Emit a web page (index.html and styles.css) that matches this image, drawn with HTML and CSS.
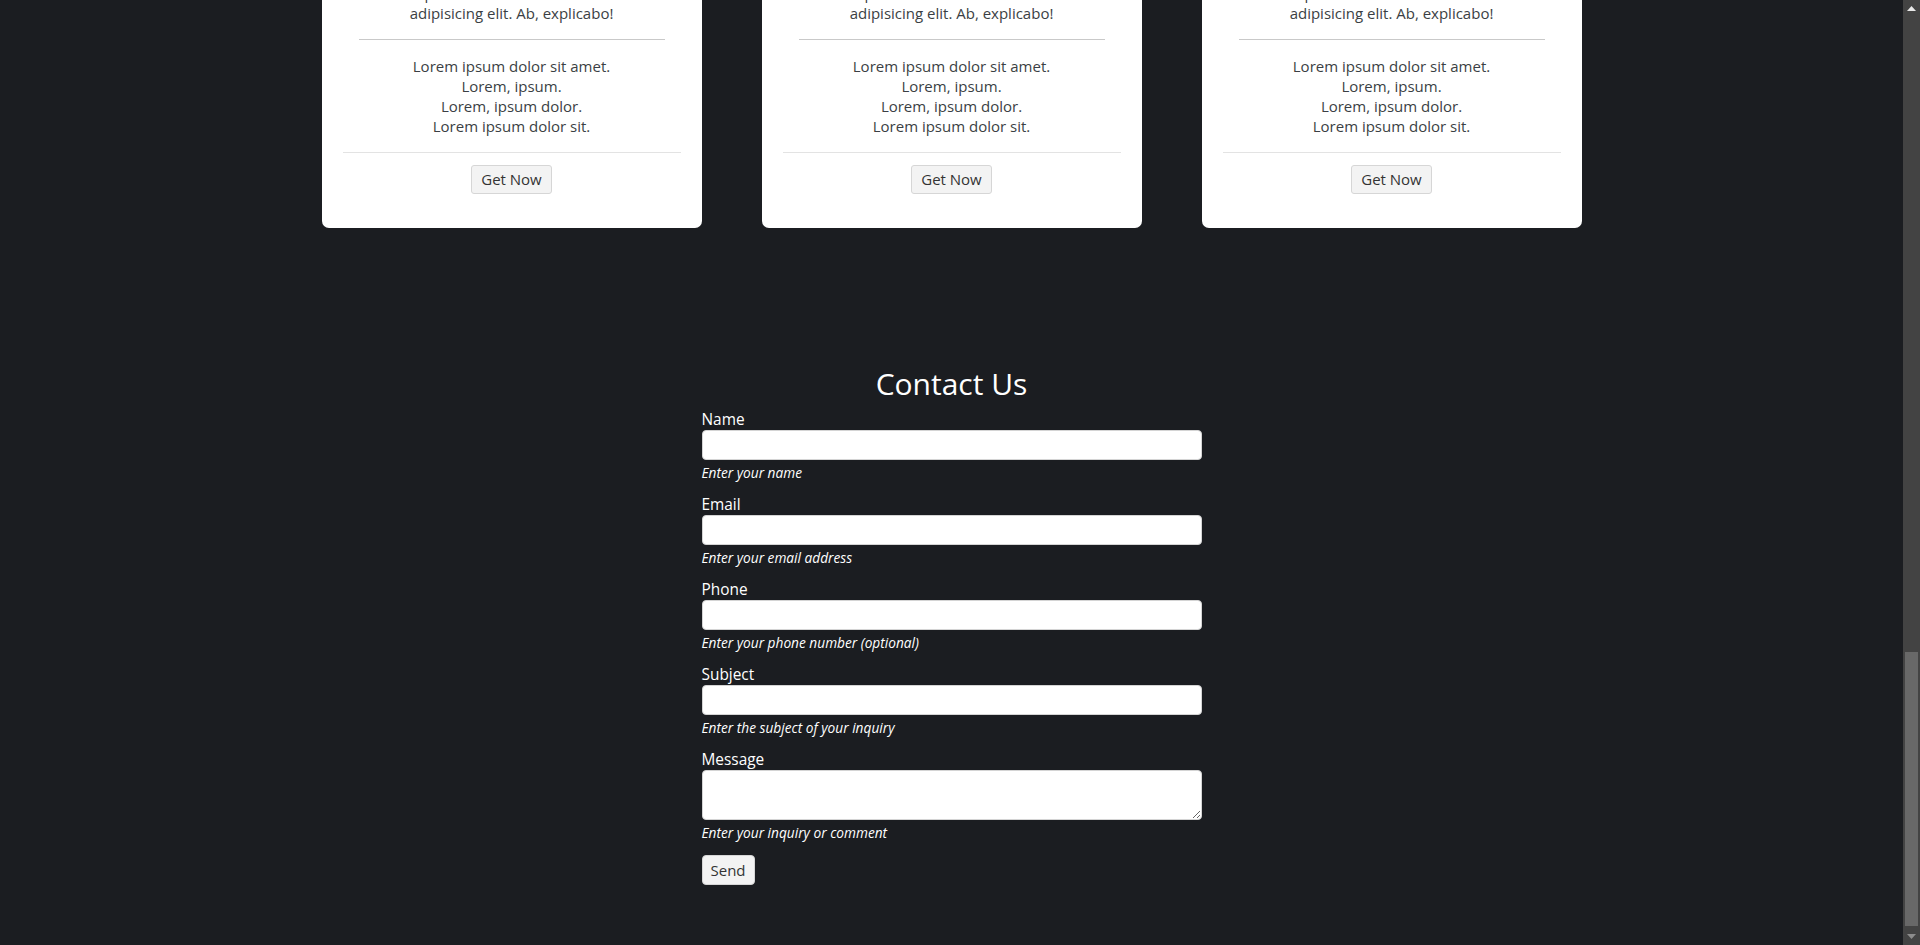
FILE: index.html
```html
<!DOCTYPE html>
<html lang="en">
<head>
<meta charset="utf-8">
<title>Pricing &amp; Contact</title>
<link rel="stylesheet" href="styles.css">
</head>
<body>
<div class="page">
  <section class="pricing">
    <div class="card">
      <div class="card-head">
        <h3 class="card-title">Basic</h3>
        <div class="price">$9 / month</div>
      </div>
      <div class="card-body">
        <p class="desc">Lorem ipsum dolor sit amet consectetur adipisicing elit. Ab, explicabo!</p>
        <hr class="rule">
        <ul class="features">
          <li>Lorem ipsum dolor sit amet.</li>
          <li>Lorem, ipsum.</li>
          <li>Lorem, ipsum dolor.</li>
          <li>Lorem ipsum dolor sit.</li>
        </ul>
      </div>
      <div class="card-footer"><button class="btn btn-get" type="button">Get Now</button></div>
    </div>
    <div class="card">
      <div class="card-head">
        <h3 class="card-title">Standard</h3>
        <div class="price">$19 / month</div>
      </div>
      <div class="card-body">
        <p class="desc">Lorem ipsum dolor sit amet consectetur adipisicing elit. Ab, explicabo!</p>
        <hr class="rule">
        <ul class="features">
          <li>Lorem ipsum dolor sit amet.</li>
          <li>Lorem, ipsum.</li>
          <li>Lorem, ipsum dolor.</li>
          <li>Lorem ipsum dolor sit.</li>
        </ul>
      </div>
      <div class="card-footer"><button class="btn btn-get" type="button">Get Now</button></div>
    </div>
    <div class="card">
      <div class="card-head">
        <h3 class="card-title">Premium</h3>
        <div class="price">$29 / month</div>
      </div>
      <div class="card-body">
        <p class="desc">Lorem ipsum dolor sit amet consectetur adipisicing elit. Ab, explicabo!</p>
        <hr class="rule">
        <ul class="features">
          <li>Lorem ipsum dolor sit amet.</li>
          <li>Lorem, ipsum.</li>
          <li>Lorem, ipsum dolor.</li>
          <li>Lorem ipsum dolor sit.</li>
        </ul>
      </div>
      <div class="card-footer"><button class="btn btn-get" type="button">Get Now</button></div>
    </div>
  </section>

  <section class="contact">
    <h2 class="contact-title">Contact Us</h2>
    <form class="contact-form">
      <div class="field">
        <label class="label" for="name">Name</label>
        <input class="input" id="name" type="text">
        <small class="help">Enter your name</small>
      </div>
      <div class="field">
        <label class="label" for="email">Email</label>
        <input class="input" id="email" type="email">
        <small class="help">Enter your email address</small>
      </div>
      <div class="field">
        <label class="label" for="phone">Phone</label>
        <input class="input" id="phone" type="tel">
        <small class="help">Enter your phone number (optional)</small>
      </div>
      <div class="field">
        <label class="label" for="subject">Subject</label>
        <input class="input" id="subject" type="text">
        <small class="help">Enter the subject of your inquiry</small>
      </div>
      <div class="field">
        <label class="label" for="message">Message</label>
        <textarea class="input textarea" id="message"></textarea>
        <small class="help">Enter your inquiry or comment</small>
      </div>
      <button class="btn btn-send" type="button">Send</button>
    </form>
  </section>
</div>
<div class="scrollbar">
  <div class="sb-arrow sb-up"><svg width="9" height="5" viewBox="0 0 9 5"><path d="M0 5 L4.5 0 L9 5 Z" fill="#e8e8e8"/></svg></div>
  <div class="sb-track"><div class="sb-thumb"></div></div>
  <div class="sb-arrow sb-down"><svg width="9" height="5" viewBox="0 0 9 5"><path d="M0 0 L9 0 L4.5 5 Z" fill="#8c8c8c"/></svg></div>
</div>
</body>
</html>
```

FILE: styles.css
```css
* { box-sizing: border-box; }

html, body {
  margin: 0;
  height: 945px;
  overflow: hidden;
}

body {
  background: #1b1d21;
  font-family: "Open Sans", "Liberation Sans", sans-serif;
  font-size: 15px;
  display: flex;
}

.page {
  flex: 1;
  height: 945px;
  overflow: hidden;
  display: flex;
  flex-direction: column;
  justify-content: flex-end;
  padding-bottom: 60px;
}

/* Pricing cards */
.pricing {
  display: flex;
  justify-content: center;
  gap: 60px;
  flex-shrink: 0;
}

.card {
  width: 380px;
  background: #ffffff;
  border-radius: 7px;
  padding: 24px 21px 22px;
  color: #3b3f44;
  text-align: center;
  display: flex;
  flex-direction: column;
}

.card-title {
  margin: 0 0 8px;
  font-size: 24px;
  font-weight: 500;
}

.price {
  font-size: 20px;
  margin-bottom: 12px;
}

.card-body {
  padding: 0 16px;
}

.desc {
  margin: 0;
  line-height: 20px;
}

.rule {
  margin: 16px 0;
  border: 0;
  border-top: 1px solid #c9c9c9;
  height: 0;
}

.features {
  list-style: none;
  margin: 0 0 16px;
  padding: 0;
  line-height: 20px;
}

.card-footer {
  border-top: 1px solid #e3e3e3;
  padding: 12px 0;
}

.btn {
  font-family: inherit;
  font-size: 15px;
  color: #333;
  background: #f3f3f3;
  border: 1px solid #d6d6d6;
  border-radius: 3px;
  padding: 4px 9px;
  line-height: 19px;
  cursor: pointer;
}

/* Contact */
.contact {
  margin-top: 138px;
  width: 500px;
  align-self: center;
  flex-shrink: 0;
}

.contact-title {
  margin: 0 0 8px;
  color: #ffffff;
  font-size: 30px;
  font-weight: 400;
  line-height: 36px;
  text-align: center;
}

.contact-form {
  display: flex;
  flex-direction: column;
  align-items: flex-start;
}

.field {
  width: 100%;
  display: flex;
  flex-direction: column;
  margin-bottom: 13px;
}

.label {
  color: #ffffff;
  font-size: 15.4px;
  line-height: 19px;
  margin-bottom: 1px;
  font-weight: 500;
}

.input {
  width: 100%;
  height: 30px;
  background: #ffffff;
  border: 1px solid #d4d4d4;
  border-radius: 4px;
  font-family: inherit;
  font-size: 15px;
  padding: 4px 8px;
}

.textarea {
  height: 50px;
  resize: vertical;
  display: block;
}

.help {
  margin-top: 4px;
  color: #ffffff;
  font-size: 13.7px;
  line-height: 18px;
  font-style: italic;
}

.btn-send {
  line-height: 20px;
  padding: 4px 8px;
  border-radius: 4px;
}

/* Fake window scrollbar */
.scrollbar {
  width: 17px;
  height: 945px;
  background: #434343;
  display: flex;
  flex-direction: column;
  flex-shrink: 0;
}

.sb-arrow {
  height: 17px;
  display: flex;
  align-items: center;
  justify-content: center;
}

.sb-track {
  flex: 1;
  display: flex;
  flex-direction: column;
  justify-content: flex-end;
  padding: 0 2px 2px;
}

.sb-thumb {
  height: 274px;
  background: #686868;
}
```
